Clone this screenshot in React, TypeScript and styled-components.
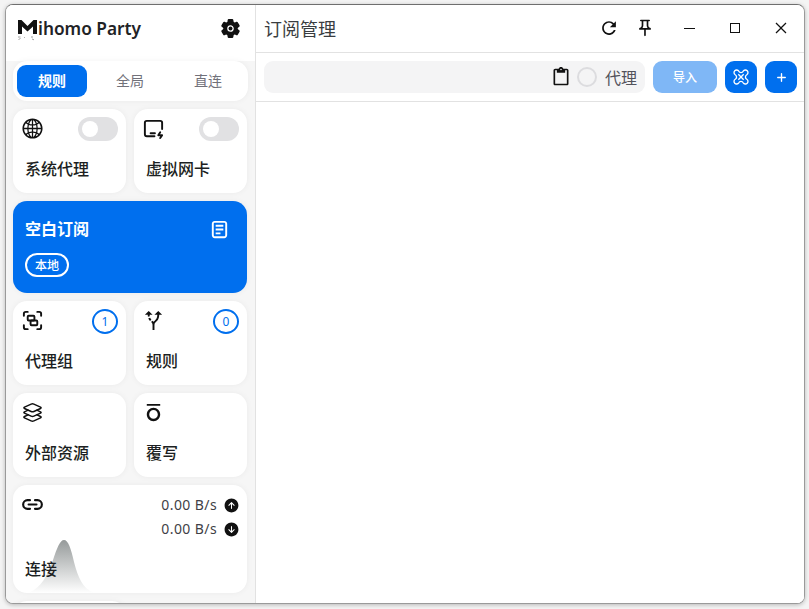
import React from 'react';
import styled, { createGlobalStyle } from 'styled-components';
import { AiOutlineGlobal } from 'react-icons/ai';
import { TbDeviceIpadHorizontalBolt } from 'react-icons/tb';
import { LuGroup } from 'react-icons/lu';
import { MdOutlineAltRoute, MdFormatOverline, MdContentPaste, MdOutlinePushPin } from 'react-icons/md';
import { IoLayersOutline, IoLink, IoSettings, IoArrowUpCircle, IoArrowDownCircle } from 'react-icons/io5';
import { IoMdRefresh } from 'react-icons/io';
import { VscChromeMinimize, VscChromeMaximize, VscChromeClose } from 'react-icons/vsc';
import { CgLoadbarDoc } from 'react-icons/cg';
import { FaPlus } from 'react-icons/fa6';

const FONT = `"Noto Sans", "Noto Sans CJK SC", sans-serif`;
const BLUE = '#006fee';
const INK = '#11181c';

const Global = createGlobalStyle`
  html, body { margin: 0; padding: 0; width: 809px; height: 609px; overflow: hidden; background: #f4f4f4; }
  #root { width: 809px; height: 609px; }
  * { box-sizing: border-box; }
`;

const Desktop = styled.div`
  width: 809px; height: 609px; padding: 4px 4px 5px 5px; font-family: ${FONT}; color: ${INK};
`;
const Win = styled.div`
  width: 100%; height: 100%; display: flex; background: #fff; overflow: hidden;
  border: 1px solid #9a9a9a; border-top-color: #6f6f6f; border-radius: 8px;
  box-shadow: 0 1px 4px rgba(0,0,0,.25);
`;
const Side = styled.aside`
  width: 250px; flex: none; height: 100%; overflow: hidden; display: flex; flex-direction: column;
  background: #f6f6f6; border-right: 1px solid #e2e2e2;
`;
const SideHead = styled.header`
  height: 56px; flex: none; background: #fff; padding: 0 14px 9px 12px; display: flex; align-items: center; justify-content: space-between;
`;
const Brand = styled.div`
  display: flex; align-items: center; font-size: 17.3px; font-weight: 600; color: #1f2326; line-height: 20px;
`;
const LogoMark = styled.svg`
  margin-top: 2px;
`;
const Gear = styled(IoSettings)` font-size: 21px; color: #111; `;
const Tabs = styled.div`
  margin: 0 7px 8px; height: 40px; flex: none; background: #fff; border-radius: 14px; padding: 4px 0 4px 4px; display: grid; grid-template-columns: 74px 78px 78px;
  box-shadow: 0 0 6px rgba(0,0,0,.05);
`;
const Tab = styled.div<{ $on?: boolean }>`
  display: flex; align-items: center; justify-content: center; border-radius: 9px; font-size: 14px; padding-bottom: 2px;
  margin-right: ${p => (p.$on ? 4 : 0)}px;
  background: ${p => (p.$on ? BLUE : 'transparent')}; color: ${p => (p.$on ? '#fff' : '#71717a')}; font-weight: ${p => (p.$on ? 700 : 400)};
`;
const Grid = styled.div`
  margin: 0 8px 0 7px; display: grid; grid-template-columns: 113px 113px; column-gap: 8px; row-gap: 8px;
`;
const Card = styled.div<{ $wide?: boolean; $blue?: boolean }>`
  position: relative; overflow: hidden; border-radius: 14px; height: ${p => (p.$wide ? (p.$blue ? 92 : 108) : 84)}px;
  grid-column: ${p => (p.$wide ? '1 / 3' : 'auto')}; background: ${p => (p.$blue ? BLUE : '#fff')}; color: ${p => (p.$blue ? '#fff' : INK)};
  box-shadow: 0 0 6px rgba(0,0,0,.05); padding: 8px 8px 0 8px;
`;
const CardTop = styled.div`
  display: flex; justify-content: space-between; align-items: flex-start; height: 24px; color: #111;
  & > svg { font-size: 23px; }
`;
const CardLabel = styled.div`
  position: absolute; left: 12px; bottom: 12px; font-size: 16px; line-height: 24px; font-weight: 500; color: #1c1f22; z-index: 1;
`;
const Switch = styled.div`
  width: 40px; height: 24px; border-radius: 12px; background: #e1e1e3; padding: 4px;
  &::before { content: ''; display: block; width: 16px; height: 16px; border-radius: 50%; background: #fff; }
`;
const Ring = styled.div`
  width: 26px; height: 25px; border-radius: 50%; border: 2px solid ${BLUE}; color: ${BLUE}; display: flex; align-items: center; justify-content: center;
  font-size: 12px;
`;
const ProfileRow = styled.div`
  display: flex; justify-content: space-between; align-items: center; padding: 8px 8px 0 4px; height: 32px;
  font-size: 16px; font-weight: 700; line-height: 24px;
  & > svg { font-size: 23px; }
`;
const Chip = styled.div`
  display: inline-flex; align-items: center; justify-content: center; margin: 12px 0 0 4px; width: 44px; height: 24px; border: 2px solid #fff; border-radius: 12px; font-size: 12px; font-weight: 500;
`;
const Rates = styled.div`
  position: absolute; right: 7px; top: 10px; display: grid; grid-template-columns: auto 16px; column-gap: 7px; row-gap: 4px; align-items: center; justify-items: end;
  font-size: 14px; line-height: 20px; color: #3f3f46; letter-spacing: .4px; & svg { font-size: 17px; color: #111; }
`;
const Spark = styled.svg`
  position: absolute; left: 0; bottom: 0; width: 100%; height: 60px;
`;
const Main = styled.main`
  flex: 1; min-width: 0; display: flex; flex-direction: column; background: #fff;
`;
const Title = styled.header`
  height: 48px; flex: none; border-bottom: 1px solid #e2e2e2; display: flex; align-items: center; justify-content: space-between; padding: 0 0 2px 8px;
`;
const TitleText = styled.h1`
  margin: 0; font-size: 18px; font-weight: 400; color: #3a3d40;
`;
const Actions = styled.div`
  display: flex; align-items: center;
`;
const IconBtn = styled.div<{ $w?: number; $gap?: number }>`
  width: ${p => p.$w ?? 36}px; height: 32px; margin-right: ${p => p.$gap ?? 0}px; display: flex; align-items: center; justify-content: center; color: #111; font-size: 20px;
`;
const Bar = styled.div`
  height: 49px; flex: none; border-bottom: 1px solid #e2e2e2; display: flex; align-items: center; padding: 0 7px 0 8px; gap: 8px;
`;
const Input = styled.div`
  flex: 1; height: 32px; border-radius: 9px; background: #f4f4f5; display: flex; align-items: center; justify-content: flex-end; padding-right: 8px; color: #111;
  & > svg { font-size: 20px; }
`;
const Radio = styled.span`
  width: 20px; height: 20px; border-radius: 50%; border: 2px solid #dcdcdf; margin: 0 8px 0 6px; flex: none;
`;
const Proxy = styled.span`
  font-size: 16px; color: #52525b;
`;
const Import = styled.div`
  width: 64px; height: 32px; border-radius: 9px; background: #7fb7f6; color: #fff; display: flex; align-items: center; justify-content: center; font-size: 12px; font-weight: 500;
`;
const Square = styled.div`
  width: 32px; height: 32px; border-radius: 9px; background: ${BLUE}; color: #fff; display: flex; align-items: center; justify-content: center; font-size: 11px;
`;
const Body = styled.div` flex: 1; background: #fff; `;

const Logo = () => (
  <LogoMark width="20" height="24" viewBox="0 0 20 24">
    <path d="M0 16V2h3.500L9.500 8 15.500 2H19v14h-4V8.500L9.500 13.500 4 8.500V16z" fill="#111" />
    <path d="M0 19h2.500M.5 21.500l2-1M6 19.500h.8M13 19h2M14 21l2 .8" stroke="#777" strokeWidth=".7" fill="none" />
  </LogoMark>
);

const Knot = () => (
  <svg width="16" height="16" viewBox="0 0 18 18" fill="none" stroke="#fff" strokeWidth="1.500">
    <path d="M6.500 2.500C7.500 4.500 10.500 4.500 11.500 2.500A2.900 2.900 0 1 1 15.500 6.500C13.500 7.500 13.500 10.500 15.500 11.500A2.900 2.900 0 1 1 11.500 15.500C10.500 13.500 7.500 13.500 6.500 15.500A2.900 2.900 0 1 1 2.500 11.500C4.500 10.500 4.500 7.500 2.500 6.500A2.900 2.900 0 1 1 6.500 2.500Z" />
    <path d="M6 6l6 6M12 6l-6 6" />
  </svg>
);

export default function App() {
  return (
    <Desktop>
      <Global />
      <Win>
        <Side>
          <SideHead>
            <Brand><Logo />ihomo Party</Brand>
            <Gear />
          </SideHead>
          <Tabs>
            <Tab $on>规则</Tab>
            <Tab>全局</Tab>
            <Tab>直连</Tab>
          </Tabs>
          <Grid>
            <Card>
              <CardTop><AiOutlineGlobal /><Switch /></CardTop>
              <CardLabel>系统代理</CardLabel>
            </Card>
            <Card>
              <CardTop><TbDeviceIpadHorizontalBolt /><Switch /></CardTop>
              <CardLabel>虚拟网卡</CardLabel>
            </Card>
            <Card $wide $blue>
              <ProfileRow>空白订阅<CgLoadbarDoc /></ProfileRow>
              <Chip>本地</Chip>
            </Card>
            <Card>
              <CardTop><LuGroup /><Ring>1</Ring></CardTop>
              <CardLabel>代理组</CardLabel>
            </Card>
            <Card>
              <CardTop><MdOutlineAltRoute /><Ring>0</Ring></CardTop>
              <CardLabel>规则</CardLabel>
            </Card>
            <Card>
              <CardTop><IoLayersOutline /></CardTop>
              <CardLabel>外部资源</CardLabel>
            </Card>
            <Card>
              <CardTop><MdFormatOverline /></CardTop>
              <CardLabel>覆写</CardLabel>
            </Card>
            <Card $wide>
              <CardTop><IoLink /></CardTop>
              <Rates>
                <span>0.00 B/s</span><IoArrowUpCircle />
                <span>0.00 B/s</span><IoArrowDownCircle />
              </Rates>
              <Spark viewBox="0 0 234 60" preserveAspectRatio="none">
                <defs>
                  <linearGradient id="sg" x1="0" y1="0" x2="0" y2="1">
                    <stop offset="0" stopColor="#8a8f8f" stopOpacity=".9" />
                    <stop offset="1" stopColor="#8a8f8f" stopOpacity="0" />
                  </linearGradient>
                </defs>
                <path d="M16 60C28 54 34 44 40 27 44 15 47 7 51 7c4 0 7 8 10 22 4 15 8 26 20 31z" fill="url(#sg)" />
              </Spark>
              <CardLabel>连接</CardLabel>
            </Card>
            <Card />
          </Grid>
        </Side>
        <Main>
          <Title>
            <TitleText>订阅管理</TitleText>
            <Actions>
              <IconBtn><IoMdRefresh /></IconBtn>
              <IconBtn $gap={3}><MdOutlinePushPin /></IconBtn>
              <IconBtn $w={46}><VscChromeMinimize style={{ fontSize: 16 }} /></IconBtn>
              <IconBtn $w={46}><VscChromeMaximize style={{ fontSize: 16 }} /></IconBtn>
              <IconBtn $w={46}><VscChromeClose style={{ fontSize: 16 }} /></IconBtn>
            </Actions>
          </Title>
          <Bar>
            <Input><MdContentPaste /><Radio /><Proxy>代理</Proxy></Input>
            <Import>导入</Import>
            <Square><Knot /></Square>
            <Square><FaPlus /></Square>
          </Bar>
          <Body />
        </Main>
      </Win>
    </Desktop>
  );
}
